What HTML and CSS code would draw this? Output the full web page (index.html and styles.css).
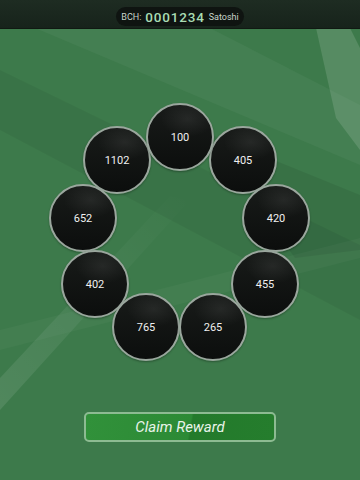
FILE: index.html
```html
<!DOCTYPE html>
<html lang="en">
<head>
    <meta charset="UTF-8">
    <meta name="viewport" content="width=device-width, initial-scale=1.0">
    <title>Satoshi Wheel</title>
    <link rel="stylesheet" href="styles.css">
</head>
<body>
    <!-- Background bands -->
    <svg class="backdrop" viewBox="0 0 360 480" preserveAspectRatio="none">
        <defs>
            <linearGradient id="fade" x1="0" y1="1" x2="1" y2="0">
                <stop offset="0" stop-color="#ffffff" stop-opacity="0.1"/>
                <stop offset="1" stop-color="#ffffff" stop-opacity="0"/>
            </linearGradient>
        </defs>
        <polygon points="35,28 210,28 360,105 360,165" fill="#ffffff" opacity="0.04"/>
        <polygon points="0,70 0,130 360,320 360,245" fill="#000000" opacity="0.05"/>
        <polygon points="200,130 360,195 360,250 295,258" fill="#000000" opacity="0.07"/>
        <polygon points="0,378 0,410 190,200 170,196" fill="url(#fade)"/>
        <polygon points="0,330 0,350 360,258 360,238" fill="#ffffff" opacity="0.03"/>
        <polygon points="316,28 350,28 360,48 360,150 336,118" fill="#ffffff" opacity="0.13"/>
    </svg>

    <header class="top-bar">
        <div class="balance">
            <span class="label">BCH:</span>
            <span class="amount">0001234</span>
            <span class="label">Satoshi</span>
        </div>
    </header>

    <main class="game">
        <div class="ring">
            <div class="chip" style="left:83px;top:26px">1102</div>
            <div class="chip" style="left:209px;top:26px">405</div>
            <div class="chip" style="left:146px;top:3px">100</div>
            <div class="chip" style="left:242px;top:84px">420</div>
            <div class="chip" style="left:49px;top:84px">652</div>
            <div class="chip" style="left:61px;top:150px">402</div>
            <div class="chip" style="left:231px;top:150px">455</div>
            <div class="chip" style="left:112px;top:193px">765</div>
            <div class="chip" style="left:179px;top:193px">265</div>
        </div>

        <button class="claim-button">Claim Reward</button>
    </main>
</body>
</html>
```

FILE: styles.css
```css
body {
    font-family: 'Roboto', 'Noto Sans', sans-serif;
    margin: 0;
    padding: 0;
    width: 360px;
    height: 480px;
    overflow: hidden;
    position: relative;
    background: #3d7a4b;
}
.backdrop {
    position: absolute;
    left: 0;
    top: 0;
    width: 360px;
    height: 480px;
    z-index: 0;
}
.top-bar {
    position: relative;
    z-index: 1;
    height: 28px;
    background: linear-gradient(to bottom, #1e2c22, #17231b);
    border-bottom: 1px solid #101912;
    display: flex;
    justify-content: center;
    align-items: center;
}
.balance {
    height: 19px;
    padding: 0 5px;
    margin-top: 5px;
    border-radius: 10px;
    background: #0f1411;
    display: flex;
    justify-content: center;
    align-items: center;
    gap: 4px;
}
.label {
    font-size: 9px;
    color: #c8d4cb;
}
.amount {
    font-size: 13.5px;
    font-weight: 500;
    letter-spacing: 0.8px;
    color: #a9dcb3;
}
.game {
    position: relative;
    z-index: 1;
    display: flex;
    flex-direction: column;
    align-items: center;
}
.ring {
    position: relative;
    width: 360px;
    height: 265px;
    margin-top: 71px;
}
.chip {
    position: absolute;
    width: 64px;
    height: 64px;
    border-radius: 50%;
    border: 2px solid #9aa69d;
    background:
        radial-gradient(ellipse 60% 40% at 62% 22%, rgba(255, 255, 255, 0.07), rgba(255, 255, 255, 0) 70%),
        linear-gradient(to bottom, #181b19, #0c0e0d);
    box-shadow: 0 1px 2px rgba(0, 0, 0, 0.3);
    color: #f0f0f0;
    font-size: 11px;
    display: flex;
    justify-content: center;
    align-items: center;
}
.claim-button {
    margin-top: 47px;
    width: 192px;
    height: 30px;
    border: 2px solid #8dbb92;
    border-radius: 5px;
    background: linear-gradient(100deg, #31913a 0%, #2c8a35 55%, #237a2b 56%, #257d2d 100%);
    color: #e9f4ea;
    font-family: 'Roboto', sans-serif;
    font-style: italic;
    font-size: 15px;
    cursor: pointer;
}
```
